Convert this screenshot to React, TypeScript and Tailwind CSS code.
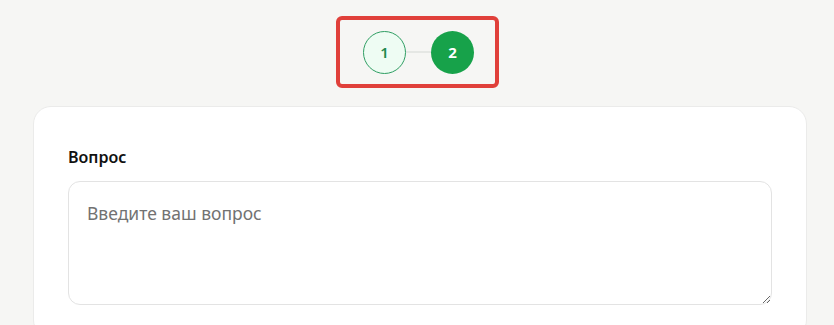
export default function App() {
  return (
    <div className="min-h-[325px] bg-[#f6f6f4] pt-4 font-['Noto_Sans',sans-serif] overflow-hidden">
      <div className="flex justify-center">
        <div className="flex h-[72px] w-[163px] items-center justify-center rounded-md border-4 border-[#e0403a] pl-[3px]">
          <div className="flex items-center">
            <div className="flex h-[43px] w-[43px] items-center justify-center rounded-full border border-[#2f9e63] bg-[#eefcf3] text-[15px] font-semibold text-[#1f8a4f]">
              1
            </div>
            <div className="h-[2px] w-[25px] bg-[#e5e7e4]" />
            <div className="flex h-[43px] w-[43px] items-center justify-center rounded-full bg-[#17a24a] text-[15px] font-bold text-white">
              2
            </div>
          </div>
        </div>
      </div>

      <div className="ml-[33px] mt-[18px] w-[774px] rounded-[18px] border border-[#ebebea] bg-white px-[34px] pb-8 pt-[38px]">
        <label htmlFor="question" className="mb-3 block text-base font-semibold leading-6 text-[#111]">
          Вопрос
        </label>
        <textarea
          id="question"
          placeholder="Введите ваш вопрос"
          className="block h-[124px] w-full rounded-xl border border-[#e3e3e3] px-[18px] py-[19px] text-[17.5px] leading-6 text-[#222] placeholder:text-[#727272] outline-none"
        />
      </div>
    </div>
  );
}
